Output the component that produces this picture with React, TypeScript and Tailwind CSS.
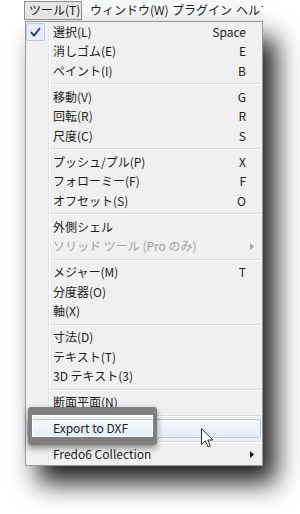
import React from 'react';

type Item =
  | { kind: 'sep' }
  | { kind: 'item'; label: string; key?: string; checked?: boolean; disabled?: boolean; sub?: boolean; hot?: boolean };

const items: Item[] = [
  { kind: 'item', label: '選択(L)', key: 'Space', checked: true },
  { kind: 'item', label: '消しゴム(E)', key: 'E' },
  { kind: 'item', label: 'ペイント(I)', key: 'B' },
  { kind: 'sep' },
  { kind: 'item', label: '移動(V)', key: 'G' },
  { kind: 'item', label: '回転(R)', key: 'R' },
  { kind: 'item', label: '尺度(C)', key: 'S' },
  { kind: 'sep' },
  { kind: 'item', label: 'プッシュ/プル(P)', key: 'X' },
  { kind: 'item', label: 'フォローミー(F)', key: 'F' },
  { kind: 'item', label: 'オフセット(S)', key: 'O' },
  { kind: 'sep' },
  { kind: 'item', label: '外側シェル' },
  { kind: 'item', label: 'ソリッド ツール (Pro のみ)', disabled: true, sub: true },
  { kind: 'sep' },
  { kind: 'item', label: 'メジャー(M)', key: 'T' },
  { kind: 'item', label: '分度器(O)' },
  { kind: 'item', label: '軸(X)' },
  { kind: 'sep' },
  { kind: 'item', label: '寸法(D)' },
  { kind: 'item', label: 'テキスト(T)' },
  { kind: 'item', label: '3D テキスト(3)' },
  { kind: 'sep' },
  { kind: 'item', label: '断面平面(N)' },
  { kind: 'sep' },
  { kind: 'item', label: 'Export to DXF', hot: true },
  { kind: 'sep' },
  { kind: 'item', label: 'Fredo6 Collection', sub: true },
];

function SubArrow({ disabled }: { disabled?: boolean }) {
  return (
    <svg width="4" height="7" viewBox="0 0 4 7" className="block">
      <path d="M0 0 L4 3.5 L0 7 Z" fill={disabled ? '#a8a8a8' : '#1a1a1a'} />
    </svg>
  );
}

function CheckBox() {
  return (
    <div className="w-[19px] h-[18px] rounded-[2px] border border-[#b9cde6] bg-[#e4ecf7] flex items-center justify-center">
      <svg width="11" height="10" viewBox="0 0 11 10">
        <path d="M1 5.2 L4 8.5 L10 1" fill="none" stroke="#183a74" strokeWidth="1.8" />
      </svg>
    </div>
  );
}

function Row({ it }: { it: Extract<Item, { kind: 'item' }> }) {
  const textColor = it.disabled ? 'text-[#a0a0a0]' : 'text-[#1c1c1c]';
  if (it.hot) {
    return (
      <div className="h-[19.5px] px-[1px]">
        <div className="h-full rounded-[3px] border border-[#a9c9ee] bg-gradient-to-b from-[#f4f8fd] to-[#e4edf9] flex items-center pl-[25px]">
          <span className={`flex-1 ${textColor}`}>{it.label}</span>
        </div>
      </div>
    );
  }
  return (
    <div className="h-[19.5px] flex">
      <div className="w-[23px] shrink-0 border-r border-[#e2e3e3] flex items-center">
        {it.checked && <CheckBox />}
      </div>
      <div className="flex-1 border-l border-white flex items-center pl-[3px]">
        <span className={`flex-1 ${textColor} whitespace-nowrap`}>{it.label}</span>
        <span className="text-[#1c1c1c] text-right">{it.key}</span>
        <div className="w-[16px] pl-[4px] flex items-center">{it.sub && <SubArrow disabled={it.disabled} />}</div>
      </div>
    </div>
  );
}

function Separator() {
  return (
    <div className="h-[6.5px] flex">
      <div className="w-[23px] shrink-0 border-r border-[#e2e3e3]" />
      <div className="flex-1 border-l border-white pt-[2.5px] pr-[1px]">
        <div className="h-px bg-[#dcdcdc]" />
        <div className="h-px bg-white" />
      </div>
    </div>
  );
}

function Cursor() {
  return (
    <svg width="13" height="20" viewBox="0 0 13 20" className="block">
      <path
        d="M0.5 0.5 L0.5 16.5 L4.3 12.8 L7 18.8 L9.3 17.8 L6.7 12 L11.8 12 Z"
        fill="#ffffff"
        stroke="#2a2a2a"
        strokeWidth="1"
        strokeLinejoin="round"
      />
    </svg>
  );
}

export default function App() {
  return (
    <div
      className="relative w-[300px] h-[514px] overflow-hidden bg-white text-[12px] leading-none"
      style={{ fontFamily: '"Noto Sans CJK JP", "Noto Sans", sans-serif' }}
    >
      {/* menu bar */}
      <div className="ml-[24px] w-[239px] h-[21px] flex items-start bg-[#f7f8f9] overflow-hidden whitespace-nowrap text-[#1c1c1c]">
        <div className="w-[58px] shrink-0 h-[19px] mt-[0.5px] border border-[#8e8f8f] bg-[#e6e6e6] flex items-center pl-[4px]">
          ツール(T)
        </div>
        <div className="w-[83px] shrink-0 h-[20px] flex items-center pl-[8px]">ウィンドウ(W)</div>
        <div className="w-[65px] shrink-0 h-[20px] flex items-center pl-[7px]">プラグイン</div>
        <div className="shrink-0 h-[20px] flex items-center pl-[6px]">ヘルプ</div>
      </div>

      {/* dropdown */}
      <div className="ml-[25px] w-[238px] border border-[#979797] bg-[#f0f0f0] pb-[1px] shadow-[13px_17px_24px_rgba(0,0,0,0.88)]">
        {items.map((it, i) => (it.kind === 'sep' ? <Separator key={i} /> : <Row key={i} it={it} />))}
      </div>

      {/* callout frame */}
      <div className="absolute left-[28px] top-[407px] w-[129px] h-[38px] rounded-[3px] border-x-[4px] border-y-[8px] border-[#727272]/90 shadow-[0_3px_6px_rgba(0,0,0,0.45)]">
        <div className="w-full h-full border border-white/90" />
      </div>

      {/* mouse pointer */}
      <div className="absolute left-[201px] top-[428px]">
        <Cursor />
      </div>
    </div>
  );
}
